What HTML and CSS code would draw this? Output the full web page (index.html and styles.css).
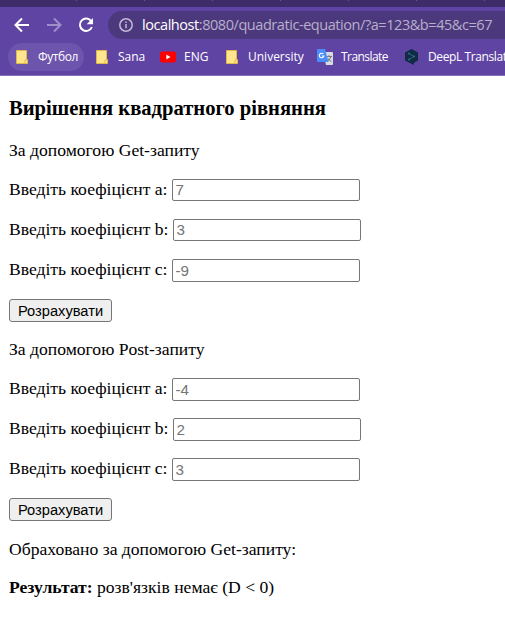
FILE: index.html
```html
<!DOCTYPE html>
<html lang="uk">
<head>
<meta charset="utf-8">
<title>Вирішення квадратного рівняння</title>
<link rel="stylesheet" href="styles.css">
</head>
<body>
<header class="browser">
  <div class="tabs"><i></i><i></i><i></i><i></i><i></i><i></i><i></i></div>
  <nav class="toolbar">
    <svg class="nav" viewBox="0 0 16 16"><path d="M15 8H2M8 1.5L1.5 8L8 14.5"/></svg>
    <svg class="nav dim" viewBox="0 0 16 16"><path d="M1 8h13M8 1.5L14.500 8L8 14.500"/></svg>
    <svg class="nav" viewBox="0 0 16 16"><path d="M13.300 4.300A6.200 6.200 0 1 0 13.900 10"/><path class="solid" d="M15 1v6.300H8.700z"/></svg>
    <div class="address">
      <svg class="info" viewBox="0 0 14 14"><circle cx="7" cy="7" r="6.200"/><path d="M7 6v4.300M7 3.500v1.500"/></svg>
      <span class="url"><b>localhost</b>:8080/quadratic-equation/?a=123&amp;b=45&amp;c=67</span>
    </div>
  </nav>
  <nav class="bookmarks">
    <a class="mark football"><svg class="folder" viewBox="0 0 12 14"><path d="M.5.500h10v9h1v4H.500z"/><path d="M9 13.500v-3.500h2"/></svg><span>Футбол</span></a>
    <a class="mark sana"><svg class="folder" viewBox="0 0 12 14"><path d="M.5.500h10v9h1v4H.500z"/><path d="M9 13.500v-3.500h2"/></svg><span>Sana</span></a>
    <a class="mark eng"><svg class="video" viewBox="0 0 16 12"><rect y=".5" width="16" height="11" rx="2.500" fill="#f00"/><path d="M6.300 3.500v5L10.500 6z" fill="#fff"/></svg><span>ENG</span></a>
    <a class="mark university"><svg class="folder" viewBox="0 0 12 14"><path d="M.5.500h10v9h1v4H.500z"/><path d="M9 13.500v-3.500h2"/></svg><span>University</span></a>
    <a class="mark translate"><svg class="lang" viewBox="0 0 16 16"><path d="M6 3h9q1 0 1 1v11q0 1-1 1H9z" fill="#d9dce1"/><path d="M9 7.500h6M12 6v1.500M14 7.500q-1 3.500-4 5M10.500 9q1.500 2.500 4 3.500" fill="none" stroke="#68747d" stroke-width=".9"/><path d="M1 0h7l3.500 13H1q-1 0-1-1V1q0-1 1-1z" fill="#4b8df8"/><path d="M6.400 5A2.300 2.300 0 1 0 6.900 7H4.800" fill="none" stroke="#fff" stroke-width="1.100"/></svg><span>Translate</span></a>
    <a class="mark deepl"><svg class="hex" viewBox="0 0 13 16"><path d="M6.500 0L13 3.500v8L9 13.700V16L6.500 14.700L0 11.500v-8z" fill="#0f2b46"/><path d="M4 4.500L9 7.500L4 10.500" fill="none" stroke="#397086" stroke-width=".8"/><g fill="#3d7183"><circle cx="4" cy="4.500" r=".9"/><circle cx="9" cy="7.500" r=".9"/><circle cx="4" cy="10.500" r=".9"/></g></svg><span>DeepL Translate</span></a>
  </nav>
</header>
<main>
  <h3>Вирішення квадратного рівняння</h3>
  <p>За допомогою Get-запиту</p>
  <form>
    <label>Введіть коефіцієнт a: <input class="short" placeholder="7"></label>
    <label>Введіть коефіцієнт b: <input class="short" placeholder="3"></label>
    <label>Введіть коефіцієнт c: <input placeholder="-9"></label>
    <button type="button">Розрахувати</button>
  </form>
  <p>За допомогою Post-запиту</p>
  <form>
    <label>Введіть коефіцієнт a: <input placeholder="-4"></label>
    <label>Введіть коефіцієнт b: <input placeholder="2"></label>
    <label>Введіть коефіцієнт c: <input placeholder="3"></label>
    <button type="button">Розрахувати</button>
  </form>
  <p class="method">Обраховано за допомогою Get-запиту:</p>
  <p class="result"><b>Результат:</b> розв'язків немає (D &lt; 0)</p>
</main>
</body>
</html>
```

FILE: styles.css
```css
* { box-sizing: border-box; }
body {
  margin: 0;
  height: 623px;
  overflow: hidden;
  background: #fff;
  color: #000;
  font: 17.6px/20px "Liberation Serif", serif;
}
.browser {
  height: 76px;
  overflow: hidden;
  background: #5f44a4;
  border-bottom: 1px solid #8671bd;
  font-family: "Open Sans", "Noto Sans", sans-serif;
}
.tabs {
  display: flex;
  gap: 67px;
  height: 7px;
  padding-left: 76px;
  background: #3e2c6a;
}
.tabs i { flex: none; width: 1px; height: 1px; background: #665687; }
.toolbar { display: flex; align-items: center; height: 36px; padding-left: 14px; }
.nav {
  flex: none;
  width: 16px;
  height: 16px;
  margin-right: 16px;
  fill: none;
  stroke: #fff;
  stroke-width: 2;
}
.nav .solid { fill: #fff; stroke: none; }
.dim { opacity: .4; }
.address {
  display: flex;
  align-items: center;
  flex: none;
  width: 430px;
  height: 28px;
  margin-left: -2px;
  padding-left: 11px;
  border-radius: 14px;
  background: #4c397d;
}
.info { width: 14px; height: 14px; margin-right: 9px; fill: none; stroke: #c2bbd3; stroke-width: 1.5; }
.url { color: #b7afcb; font-size: 14.5px; letter-spacing: -.44px; white-space: nowrap; }
.url b { color: #fff; font-weight: 400; }
.bookmarks { display: flex; align-items: center; height: 28px; padding-left: 8px; }
.mark {
  display: flex;
  align-items: center;
  flex: none;
  height: 28px;
  color: #fff;
  font-size: 12px;
  white-space: nowrap;
}
.mark svg { flex: none; }
.folder { width: 12px; height: 14px; margin-right: 10px; fill: #ffe58d; stroke: #dfba4b; }
.football { width: 76px; padding-left: 8px; border-radius: 14px; background: #6d54ad; }
.football span { letter-spacing: -.4px; }
.sana { width: 76px; padding-left: 12px; }
.eng { width: 66px; }
.university { width: 91px; }
.translate { width: 88px; letter-spacing: -.55px; }
.deepl { letter-spacing: -.4px; }
.video { width: 16px; height: 12px; margin-right: 8px; }
.lang { width: 16px; height: 16px; margin-right: 8px; }
.hex { width: 13px; height: 16px; margin-right: 10px; }
main { padding: 21px 9px 0; }
h3 { margin: 0; font-size: 20.6px; line-height: 22px; }
p { margin: 21px 0 19px; }
form { display: flex; flex-direction: column; gap: 17px; }
label { display: flex; align-items: flex-start; gap: 4px; height: 23px; white-space: nowrap; }
input {
  width: 188px;
  height: 23px;
  margin: 0;
  padding: 1px 3px 2px;
  border: 1px solid #767676;
  border-radius: 2px;
  background: #fff;
  font: 15.2px "Liberation Sans", sans-serif;
}
.short { height: 22px; }
input::placeholder { color: #757575; }
button {
  width: 103px;
  height: 23px;
  padding: 0;
  border: 1px solid #767676;
  border-radius: 3px;
  background: #efefef;
  color: #000;
  font: 14.67px "Liberation Sans", sans-serif;
}
form + p { margin: 17px 0 19px; }
form + .method { margin: 18px 0; }
form + .method + .result { margin: 0; }
```
